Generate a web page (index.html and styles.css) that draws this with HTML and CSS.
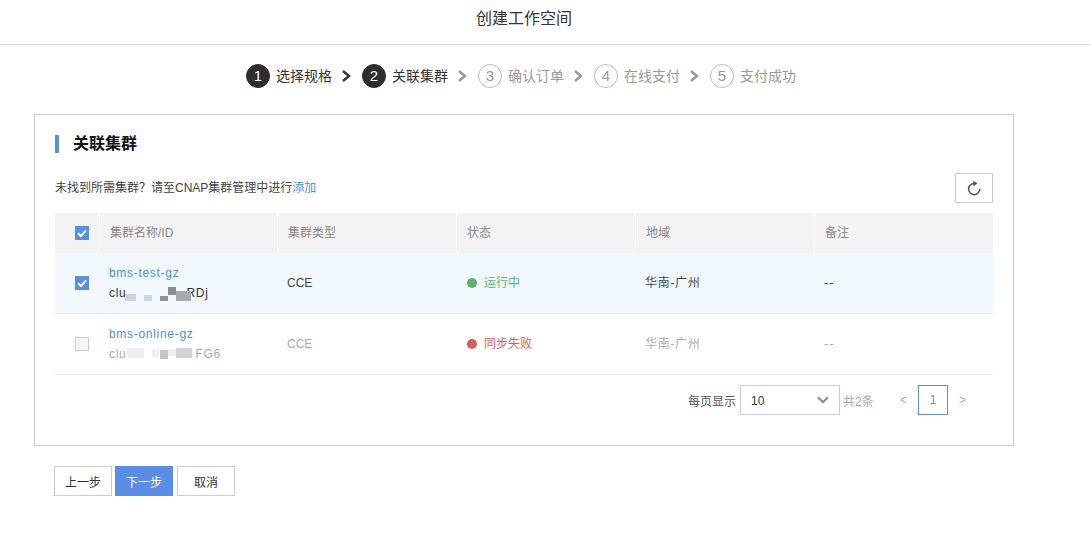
FILE: index.html
```html
<!DOCTYPE html>
<html lang="zh-CN">
<head>
<meta charset="utf-8">
<title>创建工作空间</title>
<link rel="stylesheet" href="styles.css">
</head>
<body>
<header class="page-header"><h1 class="page-title">创建工作空间</h1></header>
<ol class="steps">
  <li class="step done"><span class="step-num">1</span><span class="step-label">选择规格</span><svg class="step-arrow" viewBox="0 0 10 12"><path d="M2 1 8 6 2 11" /></svg></li>
  <li class="step done"><span class="step-num">2</span><span class="step-label">关联集群</span><svg class="step-arrow next" viewBox="0 0 10 12"><path d="M2 1 8 6 2 11" /></svg></li>
  <li class="step"><span class="step-num">3</span><span class="step-label">确认订单</span><svg class="step-arrow next" viewBox="0 0 10 12"><path d="M2 1 8 6 2 11" /></svg></li>
  <li class="step"><span class="step-num">4</span><span class="step-label">在线支付</span><svg class="step-arrow next" viewBox="0 0 10 12"><path d="M2 1 8 6 2 11" /></svg></li>
  <li class="step"><span class="step-num">5</span><span class="step-label">支付成功</span></li>
</ol>
<main class="card">
  <h2 class="card-title">关联集群</h2>
  <div class="toolbar">
    <p class="notice">未找到所需集群？请至CNAP集群管理中进行<a class="link" href="#">添加</a></p>
    <button class="refresh" type="button" aria-label="刷新"><svg viewBox="0 0 16 16" class="refresh-icon"><path d="M8.2 3A5.6 5.6 0 1 0 13.8 8.6" /><path class="fill" d="M7.4 0 11.4 2.9 7.4 5.8z" /></svg></button>
  </div>
  <div class="table">
    <div class="row head">
      <div class="cell check"><span class="box on"><svg viewBox="0 0 14 14"><path d="M3 7.2 6 10 11 4.4" /></svg></span></div>
      <div class="cell">集群名称/ID</div>
      <div class="cell">集群类型</div>
      <div class="cell">状态</div>
      <div class="cell">地域</div>
      <div class="cell">备注</div>
    </div>
    <div class="row selected">
      <div class="cell check"><span class="box on"><svg viewBox="0 0 14 14"><path d="M3 7.2 6 10 11 4.4" /></svg></span></div>
      <div class="cell stack"><a class="link wide" href="#">bms-test-gz</a><span class="id wide">clu<svg class="mosaic m1" viewBox="0 0 70 16"><rect x="3" y="8" width="11" height="7" fill="#cfd2d6"/><rect x="22" y="9" width="8" height="6" fill="#d3d5d8"/><rect x="38" y="10" width="8" height="5" fill="#8f9194"/><rect x="46" y="1" width="8" height="8" fill="#8b8c8e"/><rect x="54" y="5" width="15" height="10" fill="#a9abae"/></svg>RDj</span></div>
      <div class="cell">CCE</div>
      <div class="cell status-cell"><span class="status ok"><i class="dot"></i>运行中</span></div>
      <div class="cell wide">华南-广州</div>
      <div class="cell dashes">--</div>
    </div>
    <div class="row disabled">
      <div class="cell check"><span class="box"></span></div>
      <div class="cell stack"><a class="link wide" href="#">bms-online-gz</a><span class="id wide">clu<svg class="mosaic m2" viewBox="0 0 70 16"><rect x="1" y="1" width="17" height="10" fill="#eeeeee"/><rect x="26" y="2" width="7" height="8" fill="#f0f0f0"/><rect x="34" y="3" width="8" height="9" fill="#c4c4c4"/><rect x="42" y="2" width="8" height="7" fill="#eeeeee"/><rect x="50" y="1" width="16" height="10" fill="#d4d4d4"/></svg>FG6</span></div>
      <div class="cell">CCE</div>
      <div class="cell status-cell"><span class="status bad"><i class="dot"></i>同步失败</span></div>
      <div class="cell wide">华南-广州</div>
      <div class="cell dashes">--</div>
    </div>
  </div>
  <div class="pager">
    <span class="pager-label">每页显示</span>
    <div class="select"><span class="select-value">10</span><svg viewBox="0 0 12 8"><path d="M1 1.2 6 6.2 11 1.2" /></svg></div>
    <span class="pager-total">共2条</span>
    <span class="page-arrow prev">&lt;</span>
    <span class="page-current">1</span>
    <span class="page-arrow">&gt;</span>
  </div>
</main>
<footer class="actions">
  <button class="btn" type="button">上一步</button>
  <button class="btn primary" type="button">下一步</button>
  <button class="btn cancel" type="button">取消</button>
</footer>
</body>
</html>
```
FILE: styles.css
```css
* { box-sizing: border-box; }
html, body { margin: 0; padding: 0; }
body {
  width: 1091px;
  height: 539px;
  overflow: hidden;
  background: #fff;
  color: #444;
  font-family: "Liberation Sans", "Noto Sans CJK SC", sans-serif;
  font-size: 12px;
}
a { text-decoration: none; }
.link { color: #4a90e2; }
.wide { letter-spacing: 0.7px; }
.dashes { letter-spacing: 1px; font-size: 13px; }

.page-header {
  height: 45px;
  border-bottom: 1px solid #dcdcdc;
  padding-right: 43px;
}
.page-title {
  margin: 0;
  text-align: center;
  font-size: 16px;
  font-weight: 400;
  line-height: 38px;
  color: #333;
}

.steps {
  list-style: none;
  margin: 0;
  padding: 19px 0 0 246px;
  height: 69px;
  display: flex;
  align-items: flex-start;
}
.step {
  display: flex;
  align-items: center;
  height: 24px;
  color: #999;
  font-size: 14px;
}
.step-num {
  width: 24px;
  height: 24px;
  border-radius: 50%;
  border: 1px solid #bbb;
  color: #999;
  font-size: 15px;
  line-height: 22px;
  text-align: center;
}
.step-label { margin-left: 6px; width: 56px; white-space: nowrap; position: relative; top: -1px; }
.step-arrow {
  width: 10px;
  height: 12px;
  margin: 0 11px 0 9px;
  fill: none;
  stroke: #999;
  stroke-width: 2.4;
}
.step.done { color: #333; }
.step.done .step-num { background: #2e2e2e; border-color: #2e2e2e; color: #fff; }
.step.done .step-arrow { stroke: #333; }
.step.done .step-arrow.next { stroke: #999; }

.card {
  width: 980px;
  height: 332px;
  margin-left: 34px;
  border: 1px solid #ccc;
  padding: 20px 20px 0;
}
.card-title {
  margin: 0;
  height: 18px;
  border-left: 4px solid #5a8de6;
  padding-left: 14px;
  font-size: 16px;
  line-height: 18px;
  font-weight: 700;
  color: #111;
}
.toolbar {
  display: flex;
  justify-content: space-between;
  align-items: flex-end;
  margin-top: 20px;
}
.notice { margin: 0 0 7px; line-height: 16px; color: #444; }
.refresh {
  width: 38px;
  height: 30px;
  padding: 0;
  background: #fff;
  border: 1px solid #ccc;
  display: flex;
  align-items: center;
  justify-content: center;
}
.refresh-icon { width: 16px; height: 17px; fill: none; stroke: #555; stroke-width: 1.5; }
.refresh-icon .fill { fill: #555; stroke: none; }

.table { margin-top: 10px; }
.row {
  display: grid;
  grid-template-columns: 44px 178px 179px 179px 179px 1fr;
  height: 61px;
  border-bottom: 1px solid #e8e8e8;
  align-items: center;
}
.cell { padding-left: 10px; white-space: nowrap; line-height: 16px; }
.cell.check { padding-left: 20px; display: flex; }
.status-cell { padding-left: 11px; }
.row.head {
  height: 40px;
  background: #f3f3f3;
  border-bottom: 0;
  color: #888;
}
.row.head .cell {
  height: 100%;
  display: flex;
  align-items: center;
  border-left: 1px solid #fff;
}
.row.head .cell.check { border-left: 0; }
.row.selected { background: #f1f8fe; }
.row.disabled { color: #aaa; }

.box {
  width: 14px;
  height: 14px;
  display: block;
  border: 1px solid #ccc;
  background: #f5f5f5;
}
.box.on { border: 0; background: #5a8de6; }
.box svg { display: block; width: 14px; height: 14px; fill: none; stroke: #fff; stroke-width: 2; }

.stack { display: flex; flex-direction: column; gap: 3px; line-height: 17px; padding-top: 1px; }
.id { color: #333; display: flex; align-items: center; height: 17px; }
.row.disabled .id { color: #aaa; }
.mosaic { display: block; width: 70px; height: 16px; filter: blur(0.6px); flex: none; }
.m1 { margin: 0 -6px 0 -4px; }
.m2 { margin: 0 -1px 0 0; }

.status { display: flex; align-items: center; }
.dot { width: 10px; height: 10px; border-radius: 50%; margin-right: 7px; display: block; }
.status.ok { color: #5cb870; }
.status.ok .dot { background: #5cb568; }
.status.bad { color: #e05a5a; }
.status.bad .dot { background: #e05a5a; }

.pager {
  display: flex;
  align-items: center;
  margin-top: 10px;
  padding-left: 633px;
  height: 30px;
}
.pager-label { width: 48px; color: #555; white-space: nowrap; }
.select {
  width: 100px;
  height: 30px;
  margin-left: 4px;
  border: 1px solid #ccc;
  padding: 0 10px;
  display: flex;
  align-items: center;
  justify-content: space-between;
  color: #333;
}
.select-value { padding-top: 1px; }
.select svg { width: 12px; height: 8px; fill: none; stroke: #888; stroke-width: 2; }
.pager-total { width: 32px; margin-left: 3px; color: #aaa; white-space: nowrap; }
.page-arrow { color: #aaa; font-size: 12px; width: 8px; }
.prev { margin-left: 25px; margin-right: 10px; }
.page-current {
  width: 30px;
  height: 30px;
  border: 1px solid #5a8de6;
  color: #5a8de6;
  line-height: 28px;
  text-align: center;
  margin-right: 11px;
}

.actions { display: flex; padding: 20px 0 0 54px; }
.btn {
  width: 58px;
  height: 30px;
  padding: 0;
  background: #fff;
  border: 1px solid #ccc;
  color: #333;
  font: inherit;
  margin-right: 3px;
}
.btn.primary { background: #5a8de6; border-color: #5a8de6; color: #fff; margin-right: 4px; }
```
